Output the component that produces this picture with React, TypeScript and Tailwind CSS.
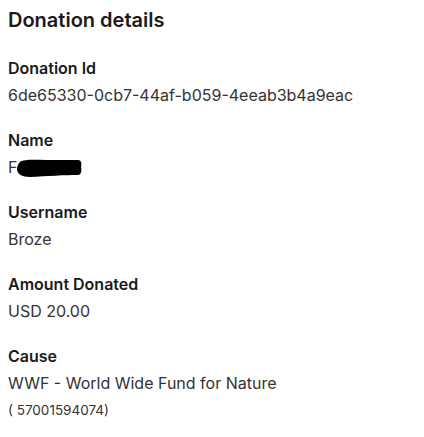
const fields = [
  { label: "Donation Id", value: "6de65330-0cb7-44af-b059-4eeab3b4a9eac" },
];

function Label({ children }: { children: React.ReactNode }) {
  return <p className="text-[16px] leading-6 font-semibold text-[#1a1a1a]">{children}</p>;
}

function Value({ children }: { children: React.ReactNode }) {
  return <p className="mt-[3px] text-[16px] leading-6 text-[#333]">{children}</p>;
}

export default function App() {
  return (
    <div
      className="min-h-screen bg-white px-2 pt-[6px] text-[#1a1a1a]"
      style={{ fontFamily: "Inter, 'Liberation Sans', sans-serif" }}
    >
      <h1 className="text-[20px] leading-7 font-semibold">Donation details</h1>

      <div className="mt-[22px] flex flex-col gap-[21px]">
        {fields.map((f) => (
          <div key={f.label}>
            <Label>{f.label}</Label>
            <Value>{f.value}</Value>
          </div>
        ))}

        <div>
          <Label>Name</Label>
          <div className="mt-[3px] flex h-6 items-center text-[16px] text-[#333]">
            <span>F</span>
            <svg width="66" height="20" viewBox="0 0 66 20" className="-ml-[1px] mt-[2px]">
              <path
                d="M4 4 C8 1 20 2 30 2 L62 2 C65 2 66 5 65 9 C66 13 65 17 62 17 C50 17 30 18 14 19 C6 19 1 16 1 11 C1 8 2 6 4 4 Z"
                fill="#000"
              />
            </svg>
          </div>
        </div>

        <div>
          <Label>Username</Label>
          <Value>Broze</Value>
        </div>

        <div>
          <Label>Amount Donated</Label>
          <Value>USD 20.00</Value>
        </div>

        <div>
          <Label>Cause</Label>
          <Value>WWF - World Wide Fund for Nature</Value>
          <p className="mt-[5px] text-[13.5px] leading-5 text-[#333]">( 57001594074)</p>
        </div>
      </div>
    </div>
  );
}
